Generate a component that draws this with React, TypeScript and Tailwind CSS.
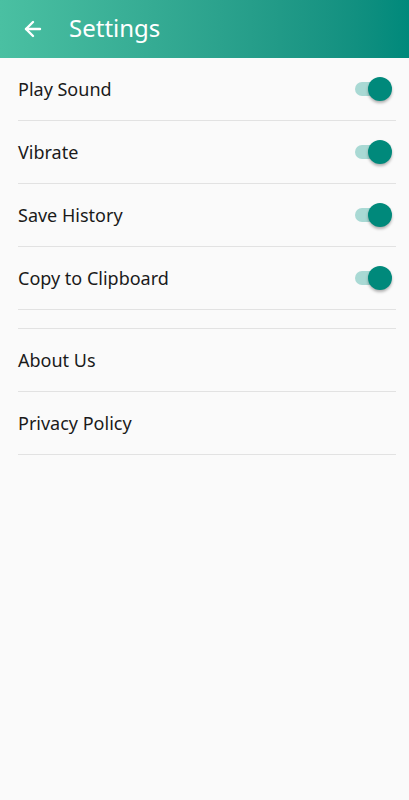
import { ArrowLeft } from 'lucide-react';

const toggles = ['Play Sound', 'Vibrate', 'Save History', 'Copy to Clipboard'];
const links = ['About Us', 'Privacy Policy'];

function Toggle() {
  return (
    <div className="relative w-[37px] h-6 flex items-center mr-[4px]">
      <div className="w-[32px] h-[14px] rounded-full bg-[#a9d9d4]" />
      <div className="absolute right-0 top-0 w-6 h-6 rounded-full bg-[#00897b] shadow-[0_2px_3px_rgba(0,0,0,0.3)]" />
    </div>
  );
}

export default function App() {
  return (
    <div className="w-[409px] h-[800px] bg-[#fafafa] font-['Noto_Sans','Open_Sans',sans-serif] text-[#1a1a1a]">
      <header className="h-[58px] flex items-center bg-gradient-to-r from-[#4ac0a2] to-[#00897b] text-white">
        <ArrowLeft className="ml-[21px] w-6 h-6" strokeWidth={2.4} />
        <span className="ml-[24px] text-[24px] leading-none pb-[2px]">Settings</span>
      </header>
      <div className="pl-[18px] pr-[13px]">
        {toggles.map((t) => (
          <div key={t} className="h-[63px] flex items-center justify-between border-b border-[#e2e2e2]">
            <span className="text-[18px] pt-[1px]">{t}</span>
            <Toggle />
          </div>
        ))}
        <div className="h-[19px] border-b border-[#e2e2e2]" />
        {links.map((t) => (
          <div key={t} className="h-[63px] flex items-center border-b border-[#e2e2e2]">
            <span className="text-[18px] pt-[1px]">{t}</span>
          </div>
        ))}
      </div>
    </div>
  );
}
